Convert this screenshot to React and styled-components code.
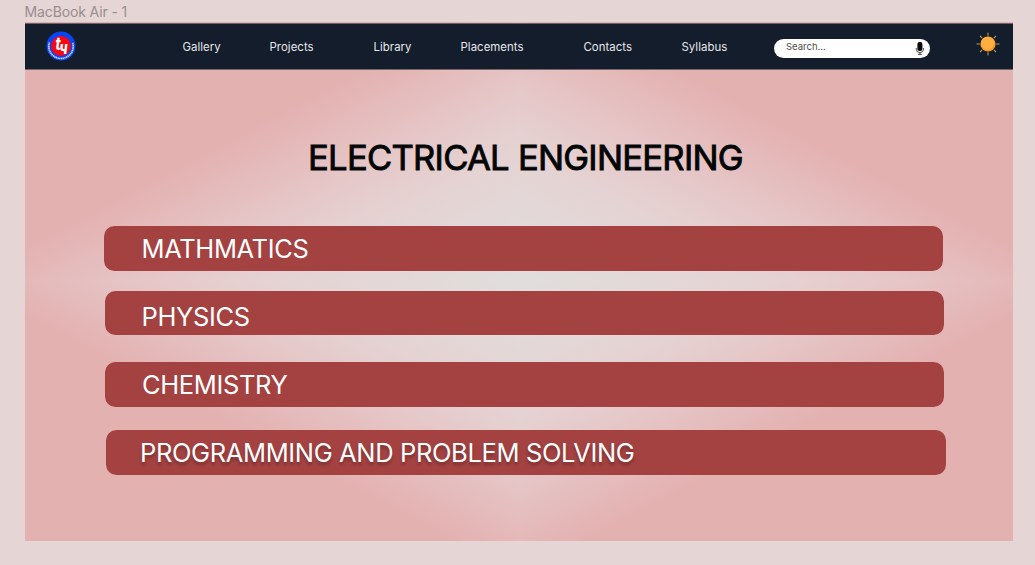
import React from "react";
import styled, { createGlobalStyle } from "styled-components";

const GlobalStyle = createGlobalStyle`
  *, *::before, *::after { box-sizing: border-box; }
  body {
    margin: 0;
    background: #e6d5d5;
    font-family: Inter, "Liberation Sans", sans-serif;
  }
`;

const Canvas = styled.div`
  width: 1035px;
  height: 565px;
  padding: 3px 22.5px 0 24.5px;
  overflow: hidden;
  background: #e6d5d5;
`;

const FrameLabel = styled.div`
  height: 19px;
  font-size: 14px;
  line-height: 17px;
  letter-spacing: -0.12px;
  color: #988d8e;
`;

const Frame = styled.div`
  height: 519px;
  padding-top: 1px;
  --glow: #e0dedd 0%, #e5d3d3 25%, #e6c8c9 37%, #e4b1b1 56.5%;
  background:
    linear-gradient(to bottom right, var(--glow)) bottom right / 50.1% 50.1% no-repeat,
    linear-gradient(to bottom left, var(--glow)) bottom left / 50.1% 50.1% no-repeat,
    linear-gradient(to top left, var(--glow)) top left / 50.1% 50.1% no-repeat,
    linear-gradient(to top right, var(--glow)) top right / 50.1% 50.1% no-repeat;
`;

const Header = styled.header`
  display: grid;
  grid-template-columns: 158px 591.5px 156px 1fr;
  height: 47px;
  border-top: 1px solid #6f5f68;
  border-bottom: 1px solid #75666e;
  background: #141d2b;
`;

const LogoMark = styled.svg`
  width: 30px;
  height: 30px;
  margin: 7px 0 0 21px;
`;

const Nav = styled.nav`
  display: grid;
  grid-template-columns: 87px 104px 87px 123px 98px auto;
`;

const NavLink = styled.a`
  font-size: 11.4px;
  line-height: 14px;
  padding-top: 16px;
  letter-spacing: 0.05px;
  color: #e6e8eb;
`;

const Search = styled.div`
  display: flex;
  justify-content: space-between;
  width: 156px;
  height: 19px;
  margin-top: 15px;
  padding: 0 4px 0 12px;
  border-radius: 10px;
  background: #fff;
`;

const Placeholder = styled.span`
  font-size: 9.5px;
  line-height: 16px;
  color: #4c4c4c;
`;

const MicIcon = styled.svg`
  width: 12px;
  height: 15px;
  margin-top: 2px;
`;

const SunIcon = styled.svg`
  width: 26px;
  height: 26px;
  margin: 7px 0 0 45.2px;
`;

const Title = styled.h1`
  margin: 66px 0 0 283.5px;
  height: 43.5px;
  font-size: 34.6px;
  line-height: 43px;
  font-weight: 400;
  letter-spacing: -0.73px;
  -webkit-text-stroke: 0.9px #030605;
  white-space: nowrap;
  color: #030605;
`;

const SubjectList = styled.div`
  display: flex;
  flex-direction: column;
  padding: 46.5px 0 0 79px;
`;

const Subject = styled.div`
  width: 839.5px;
  height: 44.5px;
  margin: ${(p) => p.$gap}px 0 0 ${(p) => p.$shift}px;
  padding: ${(p) => p.$top}px 0 0 ${(p) => p.$left}px;
  border-radius: 10.5px;
  background: #a44141;
  color: #fff;
  font-size: 25.5px;
  letter-spacing: -0.37px;
  line-height: 30px;
  white-space: nowrap;
  text-shadow: ${(p) => (p.$raised ? "0 3px 3px rgba(0, 0, 0, 0.25)" : "none")};
`;

const links = ["Gallery", "Projects", "Library", "Placements", "Contacts", "Syllabus"];

const subjects = [
  { name: "MATHMATICS", gap: 0, shift: 0, top: 7.5, left: 38 },
  { name: "PHYSICS", gap: 20, shift: 1, top: 11, left: 37 },
  { name: "CHEMISTRY", gap: 27, shift: 1, top: 7.5, left: 37.5 },
  { name: "PROGRAMMING AND PROBLEM SOLVING", gap: 23.5, shift: 2.5, top: 7.8, left: 34, raised: true },
];

function Logo() {
  return (
    <LogoMark viewBox="0 0 30 30">
      <circle cx="15" cy="15" r="14.5" fill="#0a45f5" />
      <path d="M3.4 11.5A12.2 12.2 0 1 0 26.6 11.5" fill="none" stroke="#c9d6ff" strokeWidth="1.7" strokeDasharray="1.3 .45" />
      <circle cx="15" cy="15" r="10" fill="#fa0511" />
      <text
        transform="translate(9.4 19.2) scale(.78 1)"
        fontSize="17"
        fontWeight="800"
        fontStyle="italic"
        fill="#fff"
        fontFamily="Inter, sans-serif"
      >
        t<tspan dx="-1.2" dy="3.8">ч</tspan>
      </text>
    </LogoMark>
  );
}

function Mic() {
  return (
    <MicIcon viewBox="0 0 12 15">
      <rect x="3.4" y="1" width="5" height="9" rx="2.1" fill="#090909" />
      <path d="M2.3 7v1.3a3.6 3.3 0 0 0 7.2 0V7M5.9 11.6v1.7M3.9 13.4h4" fill="none" stroke="#222" strokeWidth=".8" />
    </MicIcon>
  );
}

function Sun() {
  return (
    <SunIcon viewBox="0 0 26 26">
      <g stroke="#b9a65f" strokeWidth="1">
        {[0, 45, 90, 135, 180, 225, 270, 315].map((a) => (
          <path key={a} d="M13 1.6v3.2" transform={`rotate(${a} 13 13)`} />
        ))}
      </g>
      <circle cx="13" cy="13" r="7.6" fill="#fb9a22" />
      <circle cx="12.6" cy="12.2" r="6.5" fill="#ffae42" />
    </SunIcon>
  );
}

export default function App() {
  return (
    <Canvas>
      <GlobalStyle />
      <FrameLabel>MacBook Air - 1</FrameLabel>
      <Frame>
        <Header>
          <Logo />
          <Nav>
            {links.map((label) => (
              <NavLink key={label}>{label}</NavLink>
            ))}
          </Nav>
          <Search>
            <Placeholder>Search...</Placeholder>
            <Mic />
          </Search>
          <Sun />
        </Header>
        <Title>ELECTRICAL ENGINEERING</Title>
        <SubjectList>
          {subjects.map((s) => (
            <Subject key={s.name} $gap={s.gap} $shift={s.shift} $top={s.top} $left={s.left} $raised={s.raised}>
              {s.name}
            </Subject>
          ))}
        </SubjectList>
      </Frame>
    </Canvas>
  );
}
